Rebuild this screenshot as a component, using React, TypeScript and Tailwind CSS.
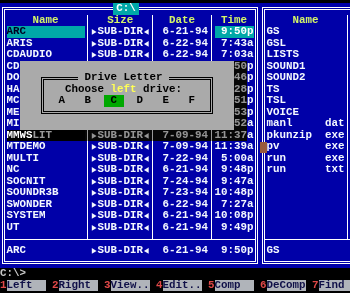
import React from "react";

type LRow = { name: string; date: string; time: string; hl?: boolean; dark?: boolean; hidden?: boolean };

const left: LRow[] = [
  { name: "ARC", date: "6-21-94", time: "9:50p", hl: true },
  { name: "ARIS", date: "6-22-94", time: "7:43a" },
  { name: "CDAUDIO", date: "6-22-94", time: "7:03a" },
  { name: "CD", date: "", time: "50p", hidden: true },
  { name: "DO", date: "", time: "46p", hidden: true },
  { name: "HA", date: "", time: "28p", hidden: true },
  { name: "MC", date: "", time: "51p", hidden: true },
  { name: "ME", date: "", time: "53p", hidden: true },
  { name: "MI", date: "", time: "52a", hidden: true },
  { name: "MMWSLIT", date: "7-09-94", time: "11:37a", dark: true },
  { name: "MTDEMO", date: "7-09-94", time: "11:39a" },
  { name: "MULTI", date: "7-22-94", time: "5:00a" },
  { name: "NC", date: "6-21-94", time: "9:48p" },
  { name: "SOCNIT", date: "7-24-94", time: "9:47a" },
  { name: "SOUNDR3B", date: "7-23-94", time: "10:48p" },
  { name: "SWONDER", date: "6-22-94", time: "7:27a" },
  { name: "SYSTEM", date: "6-21-94", time: "10:08p" },
  { name: "UT", date: "6-21-94", time: "9:49p" },
];

const right: [string, string][] = [
  ["GS", ""],
  ["GSL", ""],
  ["LISTS", ""],
  ["SOUND1", ""],
  ["SOUND2", ""],
  ["TS", ""],
  ["TSL", ""],
  ["VOICE", ""],
  ["manl", "dat"],
  ["pkunzip", "exe"],
  ["pv", "exe"],
  ["run", "exe"],
  ["run", "txt"],
];

const keys: [string, string][] = [
  ["1", "Left"],
  ["2", "Right"],
  ["3", "View.."],
  ["4", "Edit.."],
  ["5", "Comp"],
  ["6", "DeComp"],
  ["7", "Find"],
];

const ROW = "h-[11.53px] leading-[11.53px] whitespace-pre";
const HEAD = "h-[11.53px] leading-[11.53px] text-center text-[#d4f468]";

function Tri({ dir }: { dir: "r" | "l" }) {
  return (
    <svg width="6.5" height="11.53" viewBox="0 0 6.5 11.53" className="shrink-0">
      <polygon
        points={dir === "r" ? "0.8,3 5.6,5.9 0.8,8.8" : "5.7,3 0.9,5.9 5.7,8.8"}
        fill="currentColor"
      />
    </svg>
  );
}

function SubDir() {
  return (
    <div className="flex h-[11.53px] items-center leading-[11.53px]">
      <Tri dir="r" />
      <span>SUB-DIR</span>
      <Tri dir="l" />
    </div>
  );
}

function Divider() {
  return (
    <div className="flex w-[6.5px] shrink-0 justify-center">
      <div className="-mb-[5.77px] h-[224.84px] w-px bg-white" />
    </div>
  );
}

function Separator() {
  return (
    <div className="-mx-[1.75px] flex h-[11.53px] items-center">
      <div className="h-px w-full bg-white" />
    </div>
  );
}

function LeftPanel() {
  return (
    <div className="relative h-[265.19px] w-[260px] shrink-0 bg-[#0000a8] px-[1.75px] pb-[4.27px] text-[#f4f8ff]">
      <fieldset className="border-[3px] border-double border-white pb-[4.27px] pl-[1.75px] pr-[1.75px]">
        <legend className="ml-[106.5px] h-[11.53px] w-[26px] bg-[#00a8a8] leading-[11.53px] text-white">
          <span className="block w-[26px] text-center">{"C:\\"}</span>
        </legend>
        <div className="flex">
          <div className="w-[78px] shrink-0">
            <div className={HEAD}>Name</div>
            {left.map((r, i) => (
              <div
                key={i}
                className={`${ROW} ${
                  r.hl ? "bg-[#00a8a8] text-[#000020]" : r.dark ? "bg-black text-white" : ""
                }`}
              >
                {r.name}
              </div>
            ))}
          </div>
          <Divider />
          <div className="w-[58.5px] shrink-0">
            <div className={HEAD}>Size</div>
            {left.map((r, i) =>
              r.hidden ? <div key={i} className="h-[11.53px]" /> : <SubDir key={i} />
            )}
          </div>
          <Divider />
          <div className="w-[52px] shrink-0">
            <div className={HEAD}>Date</div>
            {left.map((r, i) => (
              <div key={i} className={`${ROW} text-right`}>
                {r.date}
              </div>
            ))}
          </div>
          <Divider />
          <div className="w-[39px] shrink-0">
            <div className={HEAD}>Time</div>
            {left.map((r, i) => (
              <div
                key={i}
                className={`${ROW} text-right ${r.hl ? "bg-[#00a8a8] text-white" : ""}`}
              >
                {r.time}
              </div>
            ))}
          </div>
        </div>
        <Separator />
        <div className="flex">
          <div className={`${ROW} w-[84.5px] shrink-0`}>ARC</div>
          <div className="w-[58.5px] shrink-0">
            <SubDir />
          </div>
          <div className={`${ROW} w-[58.5px] shrink-0 text-right`}>6-21-94</div>
          <div className={`${ROW} w-[45.5px] shrink-0 text-right`}>9:50p</div>
        </div>
      </fieldset>

      {/* dialog shadow */}
      <div className="absolute left-[234px] top-[57.65px] h-[80.71px] w-[13px] backdrop-grayscale backdrop-brightness-60" />
      <div className="absolute left-[32.5px] top-[126.83px] h-[11.53px] w-[201.5px] backdrop-grayscale backdrop-brightness-60" />

      {/* dialog */}
      <div className="absolute left-[19.5px] top-[57.65px] h-[69.18px] w-[214.5px] bg-[#aaaaaa] px-[21.25px] pt-[11.53px] text-black">
        <fieldset className="border-[3px] border-double border-black pb-[4.27px] pl-[1.75px]">
          <legend className="ml-[32.5px] h-[11.53px] whitespace-pre bg-[#aaaaaa] leading-[11.53px]">
            {" Drive Letter "}
          </legend>
          <div className={`${ROW} pl-[19.5px]`}>
            {"Choose "}
            <span className="text-[#ffff55]">left</span>
            {" drive:"}
          </div>
          <div className="flex h-[11.53px] gap-[6.5px] pl-[6.5px]">
            {["A", "B", "C", "D", "E", "F"].map((l) => (
              <div
                key={l}
                className={`h-[11.53px] w-[19.5px] text-center leading-[11.53px] ${
                  l === "C" ? "bg-[#00a800]" : ""
                }`}
              >
                {l}
              </div>
            ))}
          </div>
        </fieldset>
      </div>
    </div>
  );
}

function RightPanel() {
  const empty = Array.from({ length: 18 });
  return (
    <div className="relative h-[265.19px] w-[260px] shrink-0 bg-[#0000a8] px-[1.75px] pt-[4.27px] text-[#f4f8ff]">
      <div className="border-[3px] border-double border-white pb-[4.27px] pl-[1.75px] pr-[1.75px] pt-[4.27px]">
        <div className="flex">
          <div className="w-[78px] shrink-0">
            <div className={HEAD}>Name</div>
            {empty.map((_, i) => {
              const f = right[i];
              return (
                <div key={i} className="flex h-[11.53px] leading-[11.53px]">
                  <div className="w-[52px] shrink-0 whitespace-pre">{f ? f[0] : ""}</div>
                  <div className="w-[6.5px] shrink-0" />
                  <div className="w-[19.5px] shrink-0 whitespace-pre">{f ? f[1] : ""}</div>
                </div>
              );
            })}
          </div>
          <Divider />
          <div className="w-[78px] shrink-0" />
          <Divider />
          <div className="w-[78px] shrink-0" />
        </div>
        <Separator />
        <div className={ROW}>GS</div>
      </div>
      {/* cursor */}
      <div className="absolute left-0 top-[138.36px] h-[11.53px] w-[6.5px] bg-[#9a5a3c]" />
    </div>
  );
}

export default function App() {
  return (
    <div className="h-[293px] w-[350px] overflow-hidden bg-black pt-[3.2px] font-['Liberation_Mono',monospace] text-[10.833px] font-bold">
      <div className="flex w-[350px] overflow-hidden">
        <LeftPanel />
        <RightPanel />
      </div>
      <div className={`${ROW} text-[#c8c8c8]`}>{"C:\\>"}</div>
      <div className="flex h-[11.53px] w-[350px] overflow-hidden leading-[11.53px]">
        {keys.map(([n, l]) => (
          <React.Fragment key={n}>
            <div className="w-[6.5px] shrink-0 text-[#e04848]">{n}</div>
            <div className="w-[39px] shrink-0 whitespace-pre bg-[#b0b4ba] text-[#101048]">{l}</div>
            <div className="w-[6.5px] shrink-0" />
          </React.Fragment>
        ))}
      </div>
    </div>
  );
}
